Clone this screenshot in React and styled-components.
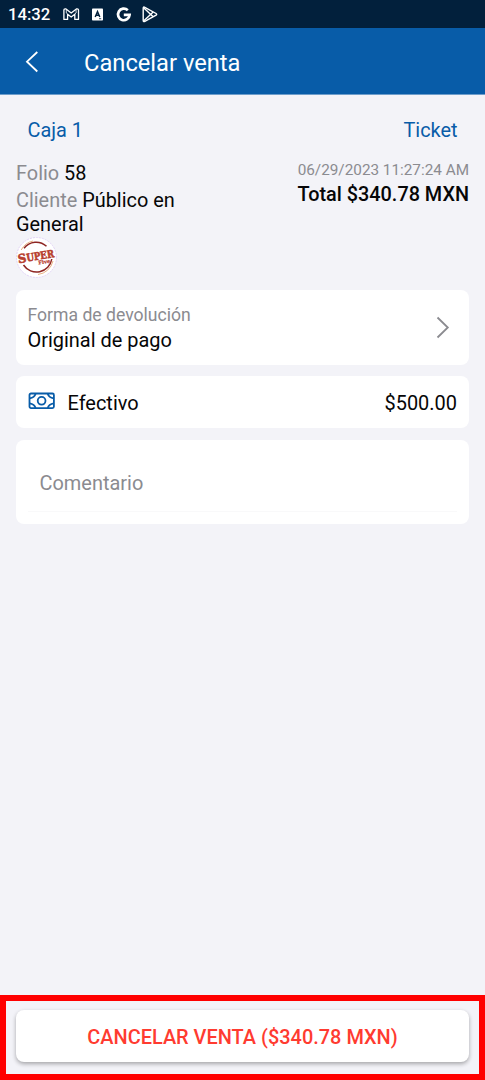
import styled, { createGlobalStyle } from "styled-components";

const GlobalStyle = createGlobalStyle`
  * {
    box-sizing: border-box;
  }

  body {
    margin: 0;
    background: #f3f3f8;
    font-family: Roboto, sans-serif;
    color: #060607;
  }
`;

const Screen = styled.div`
  display: flex;
  flex-direction: column;
  width: 485px;
  height: 1080px;
  background: #f3f3f8;
  overflow: hidden;
`;

const StatusBar = styled.div`
  display: flex;
  align-items: center;
  height: 28px;
  padding: 1px 8px 0;
  background: #02203c;
  color: #fff;
  font-size: 16.7px;
  font-weight: 500;
  line-height: 20px;

  svg {
    display: block;
  }
`;

const Clock = styled.span`
  width: 55px;
`;

const StatusIcons = styled.div`
  display: flex;
  align-items: center;
`;

const Header = styled.header`
  display: flex;
  align-items: center;
  height: 67px;
  padding: 2px 0 0 24px;
  background: #085ca8;
  border-bottom: 1px solid #6d9dcb;
  color: #fff;
`;

const BackButton = styled.button`
  display: flex;
  width: 60px;
  padding: 0;
  background: none;
  border: none;
  color: #fff;
`;

const Title = styled.h1`
  margin: 0;
  padding-top: 2px;
  font-size: 23.7px;
  font-weight: 400;
  line-height: 28px;
`;

const Content = styled.main`
  display: flex;
  flex: 1;
  flex-direction: column;
  padding: 24px 16px 0;
`;

const Links = styled.div`
  display: flex;
  justify-content: space-between;
  padding: 0 11.5px;
  color: #085ca8;
  font-size: 19.9px;
  line-height: 24px;
`;

const Summary = styled.section`
  display: flex;
  justify-content: space-between;
  height: 147px;
  padding-top: 17px;
`;

const Customer = styled.div`
  width: 190px;
  padding-top: 2px;
  font-size: 19.9px;
  line-height: 24px;
`;

const Line = styled.div`
  padding-top: ${(props) => props.$gap || 0}px;
`;

const Muted = styled.span`
  color: #8b8b90;
`;

const Totals = styled.div`
  text-align: right;
  white-space: nowrap;
`;

const DateText = styled.div`
  color: #8b8b90;
  font-size: 15.3px;
  line-height: 20px;
`;

const Total = styled.div`
  padding-top: 3px;
  font-size: 19.85px;
  font-weight: 500;
  line-height: 24px;
`;

const Logo = styled.svg`
  display: block;
  overflow: visible;
`;

const Card = styled.div`
  display: flex;
  align-items: center;
  justify-content: space-between;
  height: ${(props) => props.$height}px;
  margin-bottom: ${(props) => props.$gap || 12}px;
  padding: ${(props) => props.$drop || 0}px 12px 0 11.5px;
  background: #fff;
  border-radius: 8px;
  font-size: 19.95px;
  line-height: 24px;
`;

const Label = styled.div`
  color: #8b8b90;
  font-size: 17.6px;
  line-height: 24px;
`;

const Value = styled.div`
  padding-top: 1px;
`;

const Payment = styled.div`
  display: flex;
  align-items: center;
  gap: 13px;

  svg {
    margin-top: -4px;
  }
`;

const CommentField = styled.div`
  flex: 1;
  height: 60px;
  padding: 19px 12px 0;
  border-bottom: 1px solid #f9f9fa;
  color: #8b8b90;
`;

const Footer = styled.footer`
  height: 85px;
  padding: 9px 10px;
  border: 6px solid #ff0000;
`;

const CancelButton = styled.button`
  display: block;
  width: 100%;
  height: 52px;
  padding: 2px 0 0;
  background: #fff;
  border: none;
  border-radius: 8px;
  box-shadow: 0 2px 4px rgba(0, 0, 0, 0.32);
  color: #ff3b30;
  font-family: inherit;
  font-size: 19.95px;
  font-weight: 500;
  line-height: 24px;
`;

function NotificationIcons() {
  return (
    <StatusIcons>
      <svg width="79" height="20" viewBox="0 0 79 20" fill="none" stroke="#fff">
        {/* mail */}
        <path
          d="M.9 14.4V5.1Q.9 3.9 2.1 3.9H3L8.2 8L13.4 3.9H14.3Q15.5 3.9 15.5 5.1V14.4H11.8V9.2L8.2 12L4.6 9.2V14.4Z"
          strokeWidth="1.3"
          strokeLinejoin="round"
        />
        <path d="M3.3 4.5V8L4.6 9.2M13.1 4.5V8L11.8 9.2" strokeWidth="0.8" />
        {/* boxed letter */}
        <rect x="29" y="3.5" width="11" height="12" rx="0.8" fill="#fff" stroke="none" />
        <path d="M32.2 12L34.5 6.6L36.8 12M33 10.3H36" stroke="#02203c" strokeWidth="1.5" />
        <path d="M36 13.7H38.2" stroke="#02203c" strokeWidth="0.8" />
        {/* G */}
        <path d="M64.8 5.2A5.8 5.8 0 1 0 66.6 9.9H60.8" strokeWidth="2.7" />
      </svg>
      <StoreIcon />
    </StatusIcons>
  );
}

function StoreIcon() {
  return (
    <svg width="18" height="18" viewBox="0 0 18 18" fill="none" stroke="#fff" strokeWidth="1.4">
      <path d="M1.2 2.4V14.2Q1.2 16.2 2.8 15.3L14.1 9.1Q15.3 8.3 14.1 7.5L2.8 1.3Q1.2 .4 1.2 2.4Z" />
      <path d="M1.6 1.7L11.2 10.7M1.6 14.9L11.2 5.9" />
    </svg>
  );
}

function StoreLogo() {
  return (
    <Logo width="41" height="41" viewBox="0 0 41 41" fill="none">
      <circle cx="20.5" cy="20.5" r="20" fill="#fff" stroke="#e2d3f7" strokeDasharray="2 1" />
      <path d="M8 11.2A15.3 15.3 0 0 1 30.5 9.2" stroke="#8e2623" strokeWidth="1.5" />
      <path d="M7.5 28A15.5 15.5 0 0 0 35.8 22" stroke="#8e2623" strokeWidth="1.5" />
      <path d="M5.2 13A17.5 17.5 0 0 1 17 4" stroke="#e8b184" strokeWidth="1" />
      <path d="M22 37.5A17.5 17.5 0 0 0 37 24" stroke="#e8b184" strokeWidth="1" />
      <g
        transform="rotate(-9 20.5 21)"
        fill="#b8402f"
        stroke="#b8402f"
        strokeWidth="0.6"
        fontFamily="'DejaVu Serif', serif"
        fontWeight="700"
      >
        <text x="2" y="23.5" fontSize="12" textLength="8.5" lengthAdjust="spacingAndGlyphs">
          S
        </text>
        <text x="10.5" y="22.9" fontSize="10.5" textLength="28" lengthAdjust="spacingAndGlyphs">
          UPER
        </text>
        <text x="21.5" y="27.8" fontSize="5" strokeWidth="0.2" textLength="12" lengthAdjust="spacingAndGlyphs">
          Five
        </text>
      </g>
    </Logo>
  );
}

function CashIcon() {
  return (
    <svg width="27" height="18" viewBox="0 0 27 18" fill="none" stroke="#085ca8" strokeWidth="1.8">
      <rect x="1.5" y="1.5" width="24.4" height="14.6" rx="1.5" />
      <circle cx="13.6" cy="8.8" r="3.9" />
      <path d="M1.7 6.3Q6.4 5.5 7.6 1.7M19.7 1.7Q20.9 5.5 25.7 6.3M1.7 11.3Q6.4 12.1 7.6 15.9M19.7 15.9Q20.9 12.1 25.7 11.3" />
    </svg>
  );
}

function App() {
  return (
    <Screen>
      <GlobalStyle />
      <StatusBar>
        <Clock>14:32</Clock>
        <NotificationIcons />
      </StatusBar>

      <Header>
        <BackButton aria-label="Volver">
          <svg width="16" height="24" viewBox="0 0 16 24" fill="none">
            <path d="M13.3 2L3 11.7L13.3 21.5" stroke="#fff" strokeWidth="1.8" />
          </svg>
        </BackButton>
        <Title>Cancelar venta</Title>
      </Header>

      <Content>
        <Links>
          <span>Caja 1</span>
          <span>Ticket</span>
        </Links>

        <Summary>
          <Customer>
            <Line>
              <Muted>Folio</Muted> 58
            </Line>
            <Line $gap={3}>
              <Muted>Cliente</Muted> Público en General
            </Line>
            <StoreLogo />
          </Customer>
          <Totals>
            <DateText>06/29/2023 11:27:24 AM</DateText>
            <Total>Total $340.78 MXN</Total>
          </Totals>
        </Summary>

        <Card $height={75} $gap={11}>
          <div>
            <Label>Forma de devolución</Label>
            <Value>Original de pago</Value>
          </div>
          <svg width="24" height="24" viewBox="0 0 24 24" fill="none">
            <path d="M4.5 1.5L14.8 11.5L4.5 21.5" stroke="#8b8b90" strokeWidth="1.8" />
          </svg>
        </Card>

        <Card $height={52} $drop={2}>
          <Payment>
            <CashIcon />
            <span>Efectivo</span>
          </Payment>
          <span>$500.00</span>
        </Card>

        <Card $height={84}>
          <CommentField>Comentario</CommentField>
        </Card>
      </Content>

      <Footer>
        <CancelButton>CANCELAR VENTA ($340.78 MXN)</CancelButton>
      </Footer>
    </Screen>
  );
}

export default App;
